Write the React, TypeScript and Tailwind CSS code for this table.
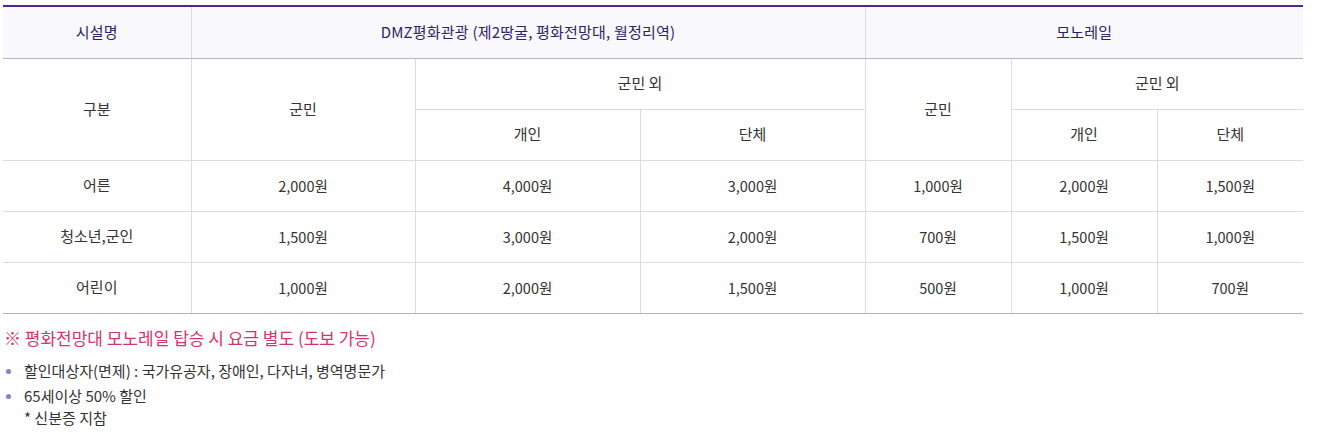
import React from "react";

const td = "h-[51px] border-b border-r border-[#dddddd] text-center align-middle text-[15px] text-[#333333] font-normal";
const tdLast = "h-[51px] border-b border-[#dddddd] text-center align-middle text-[15px] text-[#333333] font-normal";
const tdNum = "h-[51px] border-b border-r border-[#dddddd] text-center align-middle text-[14.5px] text-[#333333] font-normal";
const tdNumLast = "h-[51px] border-b border-[#dddddd] text-center align-middle text-[14.5px] text-[#333333] font-normal";

const rows = [
  ["어른", "2,000원", "4,000원", "3,000원", "1,000원", "2,000원", "1,500원"],
  ["청소년,군인", "1,500원", "3,000원", "2,000원", "700원", "1,500원", "1,000원"],
  ["어린이", "1,000원", "2,000원", "1,500원", "500원", "1,000원", "700원"],
];

export default function App() {
  return (
    <div
      className="w-[1320px] h-[435px] bg-white pl-[3px] pt-[5px]"
      style={{ fontFamily: '"Noto Sans CJK KR", "Noto Sans", sans-serif' }}
    >
      <table className="w-[1300px] border-collapse table-fixed">
        <colgroup>
          <col className="w-[188px]" />
          <col className="w-[224px]" />
          <col className="w-[225px]" />
          <col className="w-[225px]" />
          <col className="w-[146px]" />
          <col className="w-[146px]" />
          <col className="w-[146px]" />
        </colgroup>
        <thead>
          <tr className="border-t-2 border-[#4b2791] bg-[#f8f8fd]">
            <th className="h-[52px] border-r border-b border-r-[#dddddd] border-b-[#b7b2c9] text-[15px] font-normal text-[#2e2266] tracking-[0.2px]">시설명</th>
            <th colSpan={3} className="h-[52px] border-r border-b border-r-[#dddddd] border-b-[#b7b2c9] text-[15px] font-normal text-[#2e2266] tracking-[0.2px]">DMZ평화관광 (제2땅굴, 평화전망대, 월정리역)</th>
            <th colSpan={3} className="h-[52px] border-b border-b-[#b7b2c9] text-[15px] font-normal text-[#2e2266] tracking-[0.2px]">모노레일</th>
          </tr>
        </thead>
        <tbody>
          <tr>
            <td rowSpan={2} className={td}>구분</td>
            <td rowSpan={2} className={td}>군민</td>
            <td colSpan={2} className={td}>군민 외</td>
            <td rowSpan={2} className={td}>군민</td>
            <td colSpan={2} className={tdLast}>군민 외</td>
          </tr>
          <tr>
            <td className={td}>개인</td>
            <td className={td}>단체</td>
            <td className={td}>개인</td>
            <td className={tdLast}>단체</td>
          </tr>
          {rows.map((r, i) => (
            <tr key={i} className={i === rows.length - 1 ? "border-b border-[#b5b1c4]" : ""}>
              {r.map((c, j) => (
                <td
                  key={j}
                  className={
                    (j === 0 ? td : j === r.length - 1 ? tdNumLast : tdNum) +
                    (i === rows.length - 1 ? " border-b-[#b5b1c4]" : "")
                  }
                >
                  {c}
                </td>
              ))}
            </tr>
          ))}
        </tbody>
      </table>
      <div className="mt-[12px] pl-[1px] text-[17px] leading-[24px] text-[#d6336c]">
        ※ 평화전망대 모노레일 탑승 시 요금 별도 (도보 가능)
      </div>
      <ul className="mt-[10px] text-[15px] text-[#333333]">
        <li className="flex leading-[22px]">
          <span className="mt-[9px] ml-[3px] mr-[13px] h-[5px] w-[5px] rounded-full bg-[#8c7bd0] shrink-0" />
          <span>할인대상자(면제) : 국가유공자, 장애인, 다자녀, 병역명문가</span>
        </li>
        <li className="mt-[3px] flex leading-[22px]">
          <span className="mt-[9px] ml-[3px] mr-[13px] h-[5px] w-[5px] rounded-full bg-[#8c7bd0] shrink-0" />
          <span>
            65세이상 50% 할인
            <br />* 신분증 지참
          </span>
        </li>
      </ul>
    </div>
  );
}
